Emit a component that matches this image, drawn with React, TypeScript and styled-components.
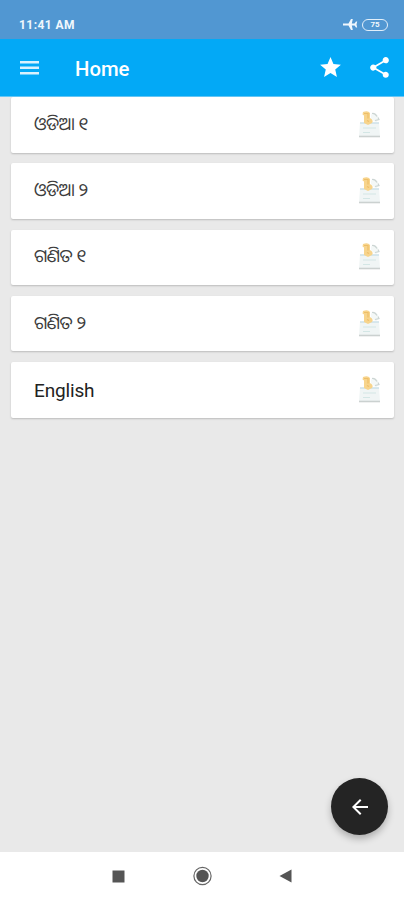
import React from 'react';
import styled, { createGlobalStyle } from 'styled-components';

const GlobalStyle = createGlobalStyle`
  * { box-sizing: border-box; }
  body { margin: 0; background: #e9e9e9; font-family: Roboto, "Noto Sans Oriya", "Noto Sans", sans-serif; }
  svg { display: block; flex: none; }
`;

const Screen = styled.div`
  height: 900px;
  display: flex;
  flex-direction: column;
  background: #e9e9e9;
  position: relative;
  overflow: hidden;
`;

const StatusBar = styled.header`
  height: 39px;
  flex: none;
  display: flex;
  align-items: center;
  padding: 10px 16px 0 19px;
  background: #5197d2;
  color: #f0f7fd;
`;

const Clock = styled.time`
  flex: 1;
  font-size: 12px;
  line-height: 14px;
  padding-top: 1px;
  font-weight: 700;
  letter-spacing: 0.45px;
`;

const Battery = styled.span`
  width: 26px;
  height: 12px;
  margin-left: 4px;
  border: 1.4px solid #e2effa;
  border-radius: 6px;
  display: flex;
  align-items: center;
  justify-content: center;
  font-size: 8px;
  line-height: 9px;
  font-weight: 700;
`;

const AppBar = styled.div`
  height: 58px;
  flex: none;
  display: flex;
  align-items: center;
  padding: 0 12px 0 17px;
  background: #03a9f6;
  color: #fff;
  border-bottom: 1px solid #65c7f6;
`;

const Title = styled.h1`
  flex: 1;
  margin: 2px 0 0 33px;
  font-size: 20.3px;
  line-height: 24px;
  font-weight: 500;
`;

const IconButton = styled.button<{ $gap?: number }>`
  padding: 0;
  border: 0;
  background: none;
  color: inherit;
  margin-left: ${({ $gap = 0 }) => $gap}px;
`;

const List = styled.main`
  flex: 1;
  display: flex;
  flex-direction: column;
  gap: 10.8px;
  padding: 0 10px 0 11px;
`;

const Card = styled.article`
  height: 55.5px;
  flex: none;
  display: flex;
  align-items: center;
  justify-content: space-between;
  padding: 0 13px 0 23px;
  background: #fff;
  border-radius: 2px;
  box-shadow: 0 1px 2px rgba(0, 0, 0, 0.2);
`;

const Label = styled.span<{ $latin?: boolean }>`
  color: ${({ $latin }) => ($latin ? '#222' : '#3c3c3c')};
  font-size: ${({ $latin }) => ($latin ? 19 : 18)}px;
  line-height: 28px;
  letter-spacing: ${({ $latin }) => ($latin ? -0.15 : -0.55)}px;
  padding-bottom: ${({ $latin }) => ($latin ? 0 : 2)}px;
  padding-top: ${({ $latin }) => ($latin ? 3 : 0)}px;
`;

const BackButton = styled.button`
  position: absolute;
  right: 16px;
  top: 778px;
  width: 57px;
  height: 57px;
  padding: 0;
  border: 0;
  border-radius: 50%;
  display: grid;
  place-items: center;
  background: #242424;
  color: #fff;
  box-shadow: 0 4px 7px rgba(0, 0, 0, 0.25);
`;

const NavBar = styled.nav`
  height: 48px;
  flex: none;
  display: flex;
  align-items: center;
  justify-content: space-between;
  padding: 0 112px;
  background: #fff;
`;

const DocumentIcon = () => (
  <svg width="23" height="28" viewBox="0 0.5 23 28">
    <path d="M2 12h19l1 14H1z" fill="#f0f5f5" />
    <path d="M13 4q7-3 8 5l-3 3-5-4z" fill="#f4f8f7" />
    <path d="M14 3q3-.5 5 3M17 10l4-1-1-2" fill="none" stroke="#ccd5d3" strokeWidth="1.2" />
    <path d="M2 12.5h19" stroke="#c4dce6" strokeWidth="1.2" />
    <path d="M5 17.5h13M5 22h7" stroke="#d3e6e5" strokeWidth="1" />
    <path d="M1 26h21" stroke="#cbd1d0" strokeWidth="1.6" />
    <path d="M5 1.5q5-2 7 1v5q4 2 2 5l-4 2-4-2V5L4.5 4z" fill="#f7d48c" />
    <path d="M6 3h4v5M9 10l2 1" fill="none" stroke="#eebe68" strokeWidth="1.2" />
  </svg>
);

const subjects = [
  { name: 'ଓଡିଆ ୧' },
  { name: 'ଓଡିଆ ୨' },
  { name: 'ଗଣିତ ୧' },
  { name: 'ଗଣିତ ୨' },
  { name: 'English', latin: true },
];

export default function App() {
  return (
    <>
      <GlobalStyle />
      <Screen>
        <StatusBar>
          <Clock>11:41 AM</Clock>
          <svg width="15" height="13" viewBox="0 0 15 13" fill="currentColor">
            <path d="M0 5.6H5.5L8 1H9.8L8.8 5.5H11.5L13 3.5H14.2L13.5 6.5 14.2 9.5H13L11.5 7.5H8.8L9.8 12H8L5.5 7.4H0z" />
          </svg>
          <Battery>75</Battery>
        </StatusBar>
        <AppBar>
          <IconButton aria-label="Menu">
            <svg width="25" height="24" viewBox="0 0 25 24" fill="#d9f1fd">
              <path d="M3 5h19v2.4H3zM3 10.5h19v2.4H3zM3 16h19v2.4H3z" />
            </svg>
          </IconButton>
          <Title>Home</Title>
          <IconButton aria-label="Favourite">
            <svg width="25" height="25" viewBox="0 0 24 24" fill="currentColor">
              <path d="M12 17.27L18.18 21l-1.64-7.03L22 9.24l-7.19-.61L12 2 9.19 8.63 2 9.24l5.46 4.73L5.82 21z" />
            </svg>
          </IconButton>
          <IconButton aria-label="Share" $gap={24}>
            <svg width="25" height="25" viewBox="0 0 24 24" fill="currentColor">
              <path d="M18 16.08c-.76 0-1.44.3-1.96.77L8.91 12.7c.05-.23.09-.46.09-.7s-.04-.47-.09-.7l7.05-4.11c.54.5 1.25.81 2.04.81 1.66 0 3-1.34 3-3s-1.34-3-3-3-3 1.34-3 3c0 .24.04.47.09.7L8.04 9.81C7.5 9.31 6.79 9 6 9c-1.66 0-3 1.34-3 3s1.34 3 3 3c.79 0 1.5-.31 2.04-.81l7.12 4.16c-.05.21-.08.43-.08.65 0 1.61 1.31 2.92 2.92 2.92s2.92-1.31 2.92-2.92-1.31-2.92-2.92-2.92z" />
            </svg>
          </IconButton>
        </AppBar>
        <List>
          {subjects.map(({ name, latin }) => (
            <Card key={name}>
              <Label $latin={latin}>{name}</Label>
              <DocumentIcon />
            </Card>
          ))}
        </List>
        <BackButton aria-label="Back">
          <svg width="24" height="24" viewBox="0 0 24 24" fill="currentColor">
            <path d="M20 11H7.83l5.59-5.59L12 4l-8 8 8 8 1.41-1.41L7.83 13H20z" />
          </svg>
        </BackButton>
        <NavBar>
          <svg width="13" height="13"><path d="M.5.5h12v12H.5z" fill="#555" /></svg>
          <svg width="20" height="20" viewBox="0 0 20 20">
            <circle cx="10.5" cy="10" r="8.6" fill="none" stroke="#666" strokeWidth="1.2" />
            <circle cx="10.5" cy="10" r="6.2" fill="#555" />
          </svg>
          <svg width="13" height="14"><path d="M12.5.5v13L.5 7z" fill="#555" /></svg>
        </NavBar>
      </Screen>
    </>
  );
}
